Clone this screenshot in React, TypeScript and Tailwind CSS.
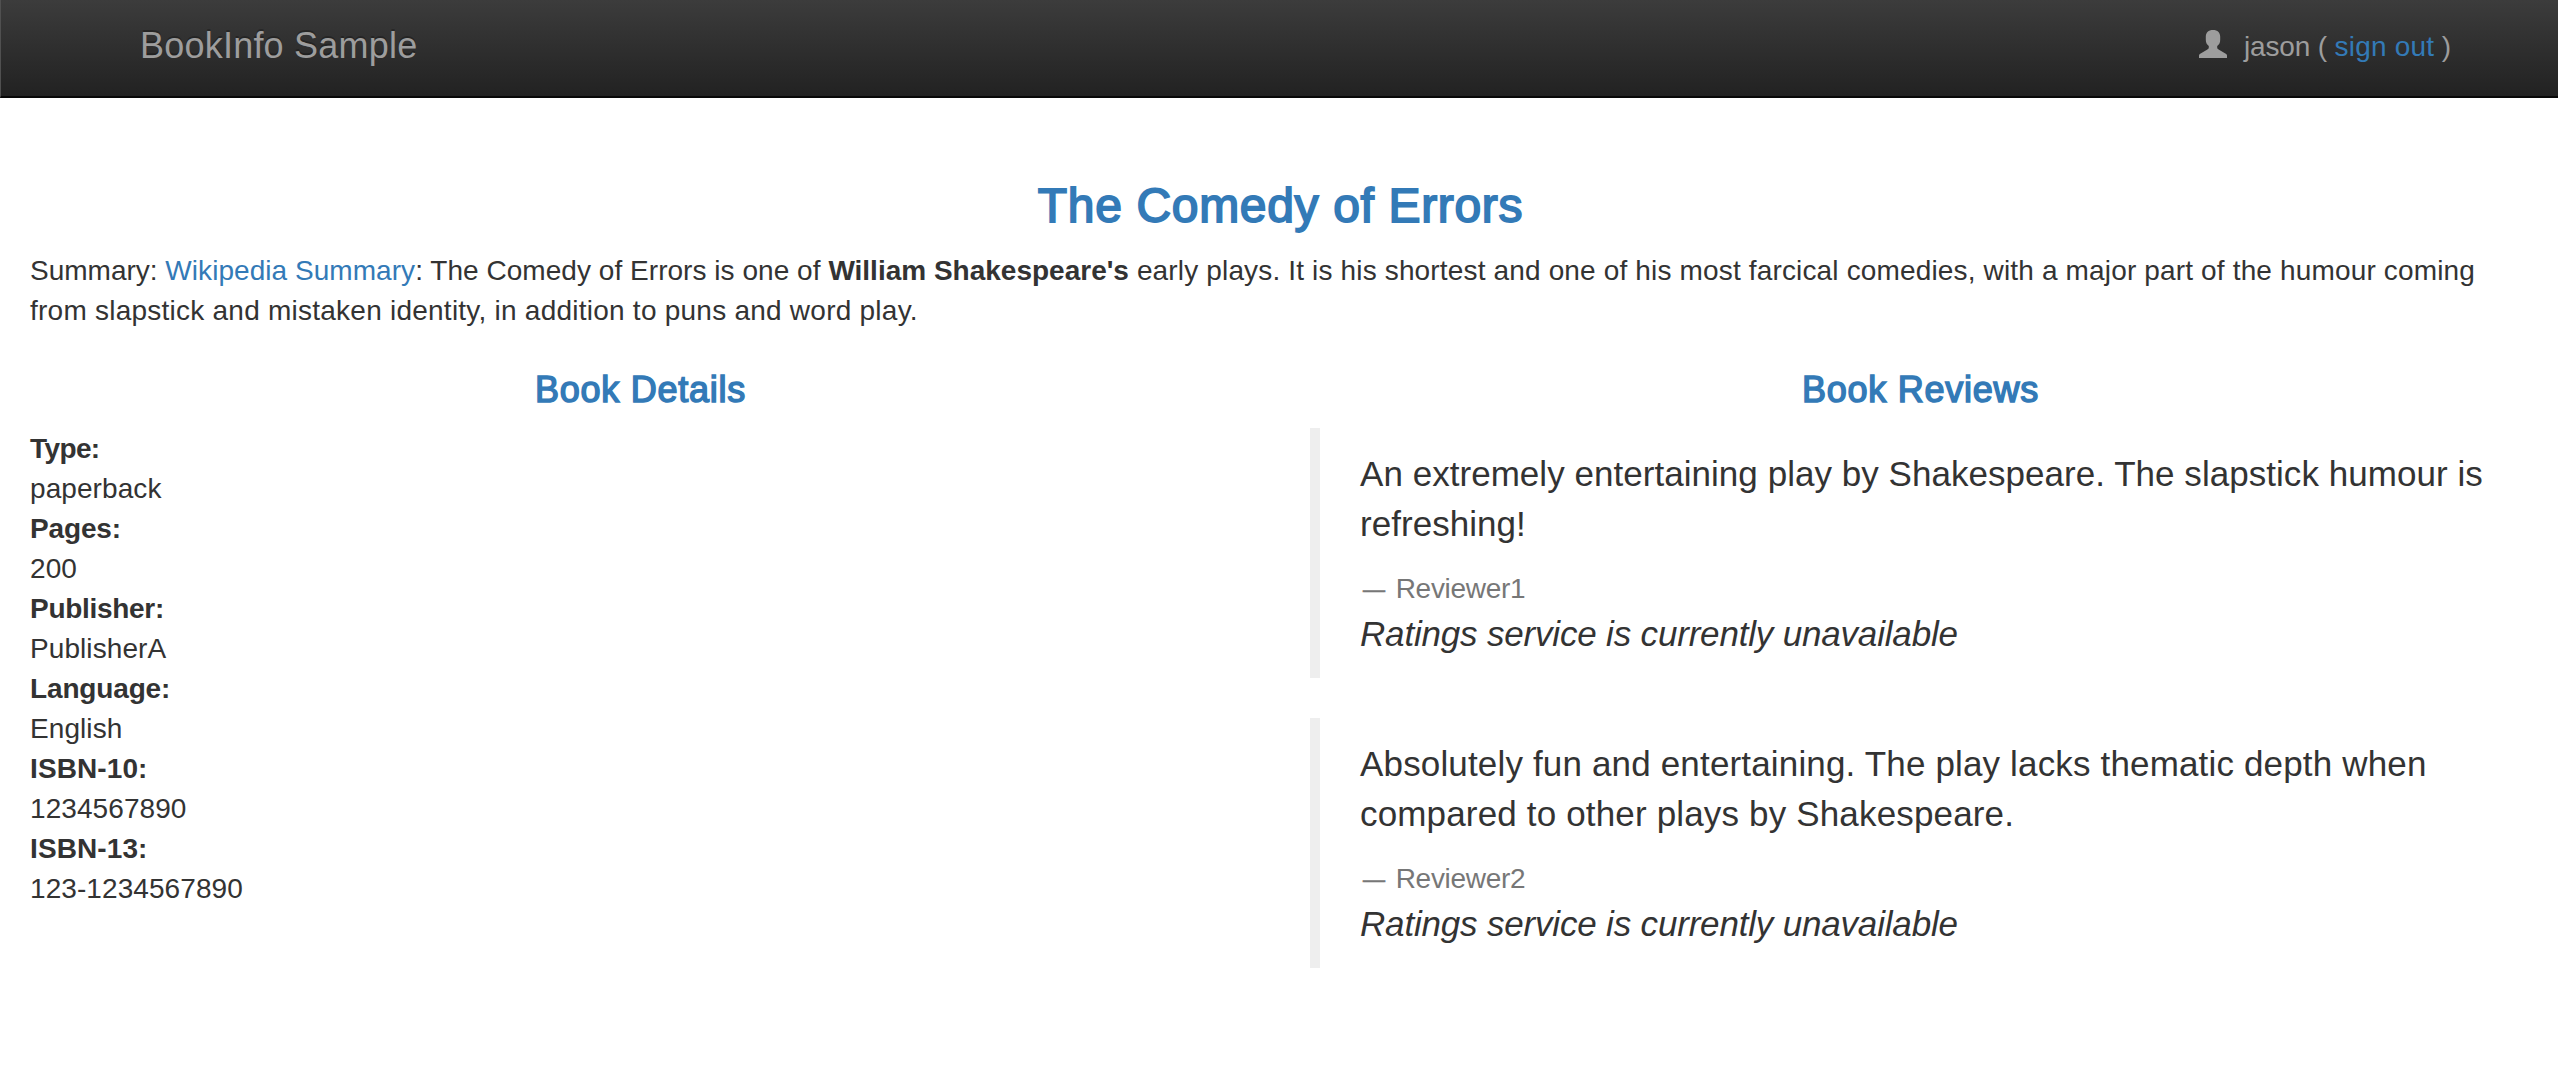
const details: { label: string; value: string; labelClass: string }[] = [
  { label: "Type:", value: "paperback", labelClass: "tracking-[-0.6px]" },
  { label: "Pages:", value: "200", labelClass: "tracking-[-0.15px]" },
  { label: "Publisher:", value: "PublisherA", labelClass: "tracking-[-0.3px]" },
  { label: "Language:", value: "English", labelClass: "tracking-[-0.15px]" },
  { label: "ISBN-10:", value: "1234567890", labelClass: "tracking-[0.1px]" },
  { label: "ISBN-13:", value: "123-1234567890", labelClass: "tracking-[0.1px]" },
];

const reviews: { text: string; reviewer: string; textClass: string }[] = [
  {
    text: "An extremely entertaining play by Shakespeare. The slapstick humour is refreshing!",
    reviewer: "Reviewer1",
    textClass: "tracking-[0.04px]",
  },
  {
    text: "Absolutely fun and entertaining. The play lacks thematic depth when compared to other plays by Shakespeare.",
    reviewer: "Reviewer2",
    textClass: "tracking-[0.16px]",
  },
];

function UserIcon() {
  return (
    <svg viewBox="0 0 28 28" className="h-7 w-7 fill-[#9d9d9d]" aria-hidden="true">
      <path d="M14 0C18.6 0 21.2 2.6 21.2 6.6V9.8C21.2 12.6 20.2 14.6 18.2 16V17.6C18.2 18.5 18.7 19.1 19.6 19.6L27.2 23.9C27.8 24.3 28 24.8 28 25.5V28H0V25.5C0 24.8 0.2 24.3 0.8 23.9L8.4 19.6C9.3 19.1 9.8 18.5 9.8 17.6V16C7.8 14.6 6.8 12.6 6.8 9.8V6.6C6.8 2.6 9.4 0 14 0Z" />
    </svg>
  );
}

function Navbar() {
  return (
    <nav className="flex h-[98px] items-start justify-between border-b-2 border-l border-b-[#080808] border-l-[#505050] bg-linear-to-b from-[#3c3c3c] to-[#222222] pr-[107px] pl-[139px] text-[#9d9d9d]">
      <a className="mt-[26px] text-[36px] leading-10 tracking-[0.22px] [text-shadow:0_-2px_0_rgba(0,0,0,0.25)]">
        BookInfo Sample
      </a>
      <div className="mt-[27px] flex items-start">
        <span className="mt-[3px] mr-[17px]">
          <UserIcon />
        </span>
        <span className="tracking-[-0.15px]">
          jason ( <a className="tracking-[0.2px] text-[#337ab7]">sign out</a> )
        </span>
      </div>
    </nav>
  );
}

export default function App() {
  return (
    <div className="min-h-[1090px] bg-white font-['Liberation_Sans',Arial,sans-serif] text-[28px] leading-10 text-[#333333]">
      <Navbar />
      <section className="px-[30px] pt-[82px]">
        <h3 className="mb-[19px] pl-[3px] text-center text-[48px] leading-[52px] font-normal tracking-[0.66px] text-[#337ab7] [-webkit-text-stroke:1.8px_#337ab7]">
          The Comedy of Errors
        </h3>
        <p>
          Summary: <a className="tracking-[0.05px] text-[#337ab7]">Wikipedia Summary</a>
          <span className="tracking-[0.04px]">: The Comedy of Errors is one of </span>
          <b>William Shakespeare's</b>
          <span className="tracking-[0.155px]">
            {" "}
            early plays. It is his shortest and one of his most farcical comedies, with a major part of the humour
            coming{" "}
          </span>
          <span className="tracking-[0.24px]">
            from slapstick and mistaken identity, in addition to puns and word play.
          </span>
        </p>
      </section>
      <div className="flex pt-[39px]">
        <section className="w-[1280px] px-[30px]">
          <h4 className="mb-[19px] pl-px text-center text-[36px] leading-10 font-normal tracking-[0.76px] text-[#337ab7] [-webkit-text-stroke:1.5px_#337ab7]">
            Book Details
          </h4>
          <dl>
            {details.map((item) => (
              <div key={item.label}>
                <dt className={`font-bold ${item.labelClass}`}>{item.label}</dt>
                <dd className="tracking-[0.08px]">{item.value}</dd>
              </div>
            ))}
          </dl>
        </section>
        <section className="w-[1278px] pr-[28px] pl-[30px]">
          <h4 className="mb-[18px] pl-px text-center text-[36px] leading-10 font-normal tracking-[0.76px] text-[#337ab7] [-webkit-text-stroke:1.5px_#337ab7]">
            Book Reviews
          </h4>
          {reviews.map((review) => (
            <blockquote
              key={review.reviewer}
              className="mb-10 h-[250px] border-l-[10px] border-[#eeeeee] pt-[21px] pr-[30px] pl-10 text-[35px] leading-[50px]"
            >
              <p className={`mb-5 ${review.textClass}`}>{review.text}</p>
              <small className="flex items-baseline text-[28px] leading-10 tracking-[-0.3px] text-[#777777]">
                <span className="relative -top-px mr-[11px] ml-[3px] text-[22px] leading-none [-webkit-text-stroke:0.7px_#777777]">
                  —
                </span>
                {review.reviewer}
              </small>
              <p className="tracking-[-0.18px] italic">Ratings service is currently unavailable</p>
            </blockquote>
          ))}
        </section>
      </div>
    </div>
  );
}
